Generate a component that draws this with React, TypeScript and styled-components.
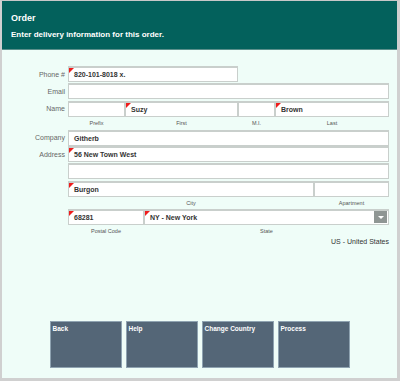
import styled, { createGlobalStyle } from "styled-components";

const GlobalStyle = createGlobalStyle`
  html, body {
    margin: 0;
    padding: 0;
    background: #ffffff;
  }
  body {
    font-family: "Liberation Sans", Arial, sans-serif;
  }
`;

const Frame = styled.div`
  width: 400px;
  height: 381px;
  box-sizing: border-box;
  border-top: 1px solid #c8c8c8;
  border-left: 2px solid #d0d0d0;
  border-right: 3px solid #d0d0d0;
  border-bottom: 3px solid #d0d0d0;
  background: #effdf8;
  display: flex;
  flex-direction: column;
`;

const Header = styled.div`
  height: 49px;
  box-sizing: border-box;
  background: #03615c;
  border-bottom: 1px solid #5b8f8b;
  padding: 12px 0 0 9px;
  color: #ffffff;
  font-weight: bold;
`;

const Title = styled.div`
  font-size: 9px;
  line-height: 11px;
`;

const Subtitle = styled.div`
  font-size: 8px;
  line-height: 10px;
  margin-top: 6px;
`;

const Form = styled.div`
  display: grid;
  grid-template-columns: 63px 321px;
  column-gap: 3px;
  align-items: center;
  padding-top: 16px;
`;

const Label = styled.div`
  font-size: 7px;
  color: #666;
  text-align: right;
  height: 16px;
  line-height: 16px;
`;

const Row = styled.div<{ $mb?: number }>`
  display: flex;
  margin-bottom: ${(p) => p.$mb ?? 1}px;
`;

const Field = styled.div<{ $w?: number }>`
  position: relative;
  box-sizing: border-box;
  height: 16px;
  ${(p) => (p.$w ? `width: ${p.$w}px; flex: none;` : "flex: 1;")}
  background: #ffffff;
  border: 1px solid #c9cfcc;
  border-top-width: 2px;
  font-size: 7px;
  font-weight: bold;
  color: #333;
  line-height: 13px;
  padding-left: 5px;
  white-space: nowrap;
  overflow: hidden;
`;

const Flag = styled.span`
  position: absolute;
  left: 0;
  top: 0;
  width: 0;
  height: 0;
  border-top: 5px solid #ef1c1c;
  border-right: 5px solid transparent;
`;

const SubLabels = styled.div<{ $mb?: number }>`
  display: flex;
  height: 12px;
  margin-bottom: ${(p) => p.$mb ?? 1}px;
`;

const SubLabel = styled.div<{ $w?: number }>`
  ${(p) => (p.$w ? `width: ${p.$w}px; flex: none;` : "flex: 1;")}
  font-size: 5.5px;
  color: #555;
  text-align: center;
  line-height: 12px;
`;

const Country = styled.div`
  font-size: 7px;
  color: #333;
  text-align: right;
  line-height: 10px;
`;

const DropButton = styled.span`
  position: absolute;
  right: 1px;
  top: 0px;
  width: 13px;
  height: 12px;
  background: #8f9694;
  display: flex;
  align-items: center;
  justify-content: center;
`;

const Arrow = styled.span`
  width: 0;
  height: 0;
  border-left: 3px solid transparent;
  border-right: 3px solid transparent;
  border-top: 3px solid #ffffff;
`;

const Spacer = styled.div`
  flex: 1;
`;

const ButtonBar = styled.div`
  display: flex;
  justify-content: center;
  gap: 4px;
  margin-bottom: 10px;
`;

const ActionButton = styled.button`
  width: 72px;
  height: 47px;
  box-sizing: border-box;
  background: #546677;
  border: 1px solid #8fa3b1;
  color: #ffffff;
  font-family: "Liberation Sans", Arial, sans-serif;
  font-size: 6.5px;
  font-weight: bold;
  text-align: left;
  display: flex;
  align-items: flex-start;
  padding: 3px 2px;
`;

function Input({
  value,
  w,
  required,
}: {
  value?: string;
  w?: number;
  required?: boolean;
}) {
  return (
    <Field $w={w}>
      {required && <Flag />}
      {value}
    </Field>
  );
}

export default function App() {
  return (
    <>
      <GlobalStyle />
      <Frame>
        <Header>
          <Title>Order</Title>
          <Subtitle>Enter delivery information for this order.</Subtitle>
        </Header>
        <Form>
          <Label>Phone #</Label>
          <Row>
            <Input w={170} required value="820-101-8018 x." />
          </Row>

          <Label>Email</Label>
          <Row $mb={2}>
            <Input />
          </Row>

          <Label>Name</Label>
          <Row $mb={0}>
            <Input w={57} />
            <Input w={113} required value="Suzy" />
            <Input w={37} />
            <Input required value="Brown" />
          </Row>
          <div />
          <SubLabels>
            <SubLabel $w={57}>Prefix</SubLabel>
            <SubLabel $w={113}>First</SubLabel>
            <SubLabel $w={37}>M.I.</SubLabel>
            <SubLabel>Last</SubLabel>
          </SubLabels>

          <Label>Company</Label>
          <Row $mb={0}>
            <Input value="Githerb" />
          </Row>

          <Label>Address</Label>
          <Row $mb={1}>
            <Input required value="56 New Town West" />
          </Row>

          <div />
          <Row $mb={2}>
            <Input />
          </Row>

          <div />
          <Row $mb={0}>
            <Input w={246} required value="Burgon" />
            <Input />
          </Row>
          <div />
          <SubLabels $mb={0}>
            <SubLabel $w={246}>City</SubLabel>
            <SubLabel>Apartment</SubLabel>
          </SubLabels>

          <div />
          <Row $mb={0}>
            <Input w={76} required value="68281" />
            <Field>
              <Flag />
              NY - New York
              <DropButton>
                <Arrow />
              </DropButton>
            </Field>
          </Row>
          <div />
          <SubLabels $mb={0}>
            <SubLabel $w={76}>Postal Code</SubLabel>
            <SubLabel>State</SubLabel>
          </SubLabels>

          <div />
          <Country>US - United States</Country>
        </Form>
        <Spacer />
        <ButtonBar>
          <ActionButton>Back</ActionButton>
          <ActionButton>Help</ActionButton>
          <ActionButton>Change Country</ActionButton>
          <ActionButton>Process</ActionButton>
        </ButtonBar>
      </Frame>
    </>
  );
}
